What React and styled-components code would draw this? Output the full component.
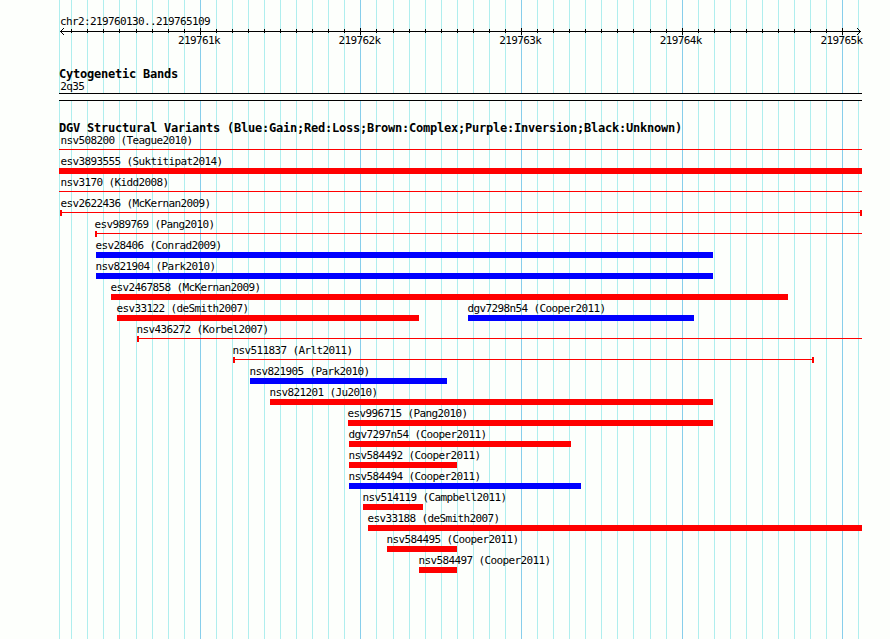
import React from 'react';
import styled, { createGlobalStyle } from 'styled-components';

const LEFT = 59;
const RIGHT = 862;
const RED = '#ff0000';
const BLUE = '#0000ff';

const kilobases = ['219761k', '219762k', '219763k', '219764k', '219765k'];

const gridLines = Array.from({ length: 50 }, (_, i) => ({
  x: Math.floor(71.78 + i * 16.0625),
  major: i % 10 === 8
}));

// drawn as a bar, or as a thin line with optional end caps
const tracks = [
  [{ name: 'nsv508200 (Teague2010)', start: 59, end: 862, line: true }],
  [{ name: 'esv3893555 (Suktitipat2014)', start: 59, end: 862 }],
  [{ name: 'nsv3170 (Kidd2008)', start: 59, end: 862, line: true }],
  [{ name: 'esv2622436 (McKernan2009)', start: 60, end: 862, line: true, caps: 'both' }],
  [{ name: 'esv989769 (Pang2010)', start: 95, end: 862, line: true, caps: 'left' }],
  [{ name: 'esv28406 (Conrad2009)', start: 96, end: 713, color: BLUE }],
  [{ name: 'nsv821904 (Park2010)', start: 96, end: 713, color: BLUE }],
  [{ name: 'esv2467858 (McKernan2009)', start: 111, end: 788 }],
  [
    { name: 'esv33122 (deSmith2007)', start: 117, end: 419 },
    { name: 'dgv7298n54 (Cooper2011)', start: 468, end: 694, color: BLUE }
  ],
  [{ name: 'nsv436272 (Korbel2007)', start: 137, end: 862, line: true, caps: 'left' }],
  [{ name: 'nsv511837 (Arlt2011)', start: 233, end: 814, line: true, caps: 'both' }],
  [{ name: 'nsv821905 (Park2010)', start: 250, end: 447, color: BLUE }],
  [{ name: 'nsv821201 (Ju2010)', start: 270, end: 713 }],
  [{ name: 'esv996715 (Pang2010)', start: 348, end: 713 }],
  [{ name: 'dgv7297n54 (Cooper2011)', start: 349, end: 571 }],
  [{ name: 'nsv584492 (Cooper2011)', start: 349, end: 457 }],
  [{ name: 'nsv584494 (Cooper2011)', start: 349, end: 581, color: BLUE }],
  [{ name: 'nsv514119 (Campbell2011)', start: 363, end: 423 }],
  [{ name: 'esv33188 (deSmith2007)', start: 368, end: 862 }],
  [{ name: 'nsv584495 (Cooper2011)', start: 387, end: 457 }],
  [{ name: 'nsv584497 (Cooper2011)', start: 419, end: 457 }]
];

const GridLines = () => (
  <Backdrop width="890" height="639" shapeRendering="crispEdges">
    <rect x={LEFT} y="0" width="1" height="639" fill="#afeeee" />
    {gridLines.map(({ x, major }) => (
      <rect key={x} x={x} y="0" width="1" height="639" fill={major ? '#87ceeb' : '#afeeee'} />
    ))}
  </Backdrop>
);

const Axis = () => (
  <AxisDrawing width="803" height="8" viewBox="59 28 803 8" shapeRendering="crispEdges">
    <rect x="60" y="31" width="801" height="1" />
    {gridLines.filter(({ x }) => x < 858).map(({ x, major }) => (
      <rect key={x} x={x} y={major ? 28 : 29} width="1" height={major ? 7 : 4} />
    ))}
    {[1, 2, 3].map(n => (
      <React.Fragment key={n}>
        <rect x={60 + n} y={31 - n} width="1" height="1" />
        <rect x={60 + n} y={31 + n} width="1" height="1" />
        <rect x={860 - n} y={31 - n} width="1" height="1" />
        <rect x={860 - n} y={31 + n} width="1" height="1" />
      </React.Fragment>
    ))}
  </AxisDrawing>
);

const Track = ({ variants }) => (
  <TrackRow>
    {variants.map((variant, i) => {
      const previous = i > 0 ? variants[i - 1].end : LEFT;

      return (
        <Variant
          key={variant.name}
          $gap={variant.start - previous}
          $width={variant.end - variant.start}
        >
          <Label $shift={variant.start <= 60 ? 60.5 - variant.start : -0.4}>{variant.name}</Label>
          {variant.line ? (
            <Span $caps={variant.caps} />
          ) : (
            <Bar $color={variant.color || RED} />
          )}
        </Variant>
      );
    })}
  </TrackRow>
);

const App = () => (
  <Page>
    <GlobalStyle />
    <GridLines />
    <Content>
      <Region>chr2:219760130..219765109</Region>
      <Axis />
      <Scale>
        {kilobases.map(value => (
          <ScaleLabel key={value}>{value}</ScaleLabel>
        ))}
      </Scale>
      <BandTitle>Cytogenetic Bands</BandTitle>
      <Label $shift={1.3}>2q35</Label>
      <Band />
      <Title>DGV Structural Variants (Blue:Gain;Red:Loss;Brown:Complex;Purple:Inversion;Black:Unknown)</Title>
      {tracks.map(variants => (
        <Track key={variants[0].name} variants={variants} />
      ))}
    </Content>
  </Page>
);

const GlobalStyle = createGlobalStyle`
  body {
    margin: 0;
    background: #fdfffc;
  }
`;

const Page = styled.div`
  display: grid;
  width: 890px;
  height: 639px;
  overflow: hidden;
  color: #000;
  font: 11px/13px 'DejaVu Sans Mono', monospace;
  letter-spacing: -0.622px;
  white-space: pre;
`;

const Backdrop = styled.svg`
  grid-area: 1 / 1;
`;

const Content = styled.main`
  grid-area: 1 / 1;
  box-sizing: border-box;
  width: ${RIGHT}px;
  padding: 15px 0 0 ${LEFT}px;
`;

const Region = styled.div`
  height: 13px;
  padding-left: 1px;
`;

const AxisDrawing = styled.svg`
  display: block;
`;

const Scale = styled.div`
  display: flex;
  height: 13px;
  margin: -2px 0 0 119px;
`;

const ScaleLabel = styled.div`
  flex: 0 0 160.6px;
`;

const Title = styled.h2`
  height: 12px;
  margin: 0;
  font-size: 12px;
  font-weight: bold;
  line-height: 13px;
  letter-spacing: -0.225px;
`;

const BandTitle = styled(Title)`
  margin-top: 21px;
`;

const Label = styled.div`
  height: 13px;
  margin-left: ${({ $shift }) => $shift}px;
`;

const Band = styled.div`
  height: 6px;
  margin-bottom: 21px;
  border: solid #000;
  border-width: 1px 0;
  background: #fdfffc;
`;

const TrackRow = styled.div`
  display: flex;
  height: 21px;
`;

const Variant = styled.div`
  flex: none;
  width: ${({ $width }) => $width}px;
  margin-left: ${({ $gap }) => $gap}px;
`;

const Bar = styled.div`
  height: 6px;
  background: ${({ $color }) => $color};
`;

const Span = styled.div`
  display: flow-root;
  box-sizing: border-box;
  height: 6px;
  border: solid ${RED};
  border-width: 0 ${({ $caps }) => ($caps === 'both' ? 2 : 0)}px 0 ${({ $caps }) => ($caps ? 2 : 0)}px;

  &::before {
    content: '';
    display: block;
    height: 1px;
    margin-top: 2px;
    background: ${RED};
  }
`;

export default App;
